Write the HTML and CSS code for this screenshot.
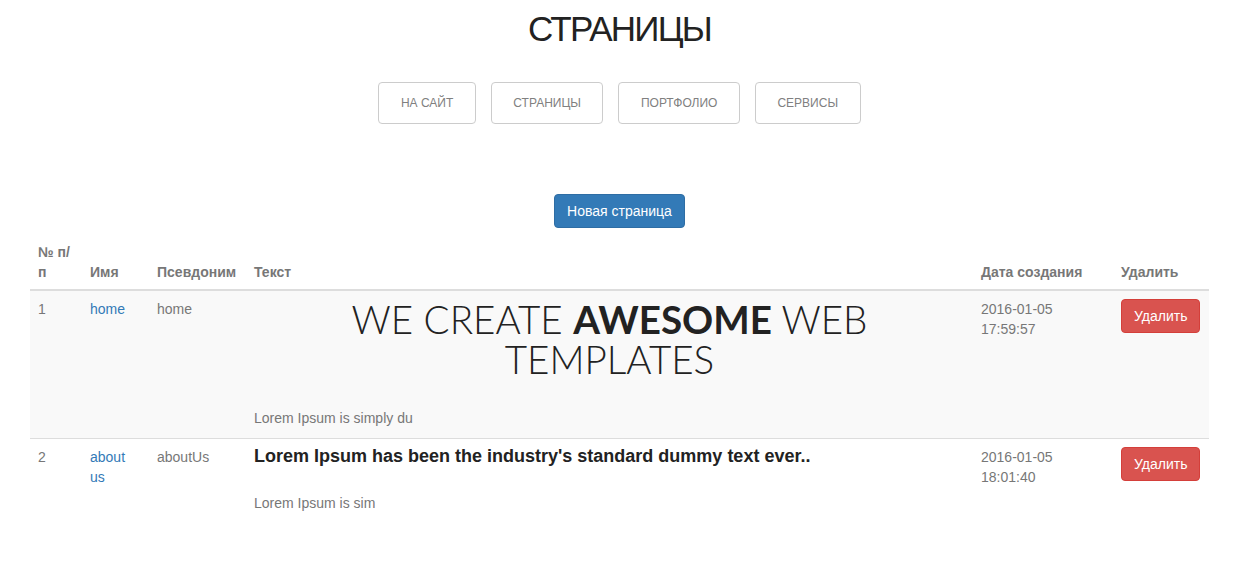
FILE: index.html
```html
<!DOCTYPE html>
<html lang="ru">
<head>
<meta charset="utf-8">
<title>Страницы</title>
<link rel="stylesheet" href="styles.css">
</head>
<body>
<div class="page">
  <h1 class="title">СТРАНИЦЫ</h1>
  <nav class="nav">
    <a class="nav-btn" href="#">На сайт</a>
    <a class="nav-btn" href="#">Страницы</a>
    <a class="nav-btn" href="#">Портфолио</a>
    <a class="nav-btn" href="#">Сервисы</a>
  </nav>
  <div class="actions">
    <a class="btn btn-primary" href="#">Новая страница</a>
  </div>
  <table class="table">
    <colgroup>
      <col class="c1"><col class="c2"><col class="c3"><col class="c4"><col class="c5"><col class="c6">
    </colgroup>
    <thead>
      <tr>
        <th>№ п/п</th>
        <th>Имя</th>
        <th>Псевдоним</th>
        <th>Текст</th>
        <th>Дата создания</th>
        <th>Удалить</th>
      </tr>
    </thead>
    <tbody>
      <tr class="odd">
        <td>1</td>
        <td><a href="#">home</a></td>
        <td>home</td>
        <td>
          <h2 class="hero">WE CREATE <b>AWESOME</b> WEB TEMPLATES</h2>
          <p class="excerpt first">Lorem Ipsum is simply du</p>
        </td>
        <td>2016-01-05 17:59:57</td>
        <td><a class="btn btn-danger" href="#">Удалить</a></td>
      </tr>
      <tr>
        <td>2</td>
        <td><a href="#">about us</a></td>
        <td>aboutUs</td>
        <td>
          <h3 class="lead">Lorem Ipsum has been the industry's standard dummy text ever..</h3>
          <p class="excerpt">Lorem Ipsum is sim</p>
        </td>
        <td>2016-01-05 18:01:40</td>
        <td><a class="btn btn-danger" href="#">Удалить</a></td>
      </tr>
    </tbody>
  </table>
</div>
</body>
</html>
```

FILE: styles.css
```css
* { box-sizing: border-box; }
html, body { margin: 0; background: #fff; }
body {
  font-family: "Liberation Sans", Arial, sans-serif;
  font-size: 14px;
  line-height: 20px;
  color: #777;
}
.page {
  padding: 0 35px 0 30px;
  display: flex;
  flex-direction: column;
  align-items: center;
}
.title {
  margin: 9px 0 0;
  font-size: 35px;
  line-height: 40px;
  font-weight: normal;
  color: #222;
  letter-spacing: -1.75px;
}
.nav {
  display: flex;
  gap: 15px;
  margin-top: 33px;
}
.nav-btn {
  display: block;
  height: 42px;
  line-height: 40px;
  padding: 0 21.5px;
  border: 1px solid #ccc;
  border-radius: 4px;
  font-size: 12px;
  text-transform: uppercase;
  color: #808080;
  text-decoration: none;
}
.actions {
  margin-top: 70px;
  display: flex;
  justify-content: center;
}
.btn {
  display: inline-block;
  padding: 6px 12px;
  line-height: 20px;
  font-size: 14px;
  border: 1px solid transparent;
  border-radius: 4px;
  color: #fff;
  text-decoration: none;
}
.btn-primary { background: #337ab7; border-color: #2e6da4; }
.btn-danger { background: #d9534f; border-color: #d43f3a; }
.table {
  width: 100%;
  border-collapse: collapse;
  table-layout: fixed;
  margin-top: 6px;
}
.c1 { width: 52px; }
.c2 { width: 67px; }
.c3 { width: 97px; }
.c5 { width: 140px; }
.c6 { width: 96px; }
.table th {
  text-align: left;
  vertical-align: bottom;
  padding: 8px 8px 7px;
  font-weight: bold;
  color: #777;
  border-bottom: 2px solid #ddd;
}
.table td {
  vertical-align: top;
  padding: 8px;
  border-top: 1px solid #ddd;
}
.table tbody tr:first-child td { border-top: 0; }
.table tr.odd td { background: #f9f9f9; }
.table a:not(.btn) { color: #337ab7; text-decoration: none; }
.hero {
  margin: 0;
  text-align: center;
  font-family: Lato, "Liberation Sans", sans-serif;
  font-weight: 300;
  font-size: 38.6px;
  line-height: 40px;
  color: #222;
}
.hero b { font-weight: 700; }
.lead {
  margin: 0;
  font-size: 18px;
  line-height: 18px;
  font-weight: bold;
  color: #222;
}
.excerpt { margin: 0; }
.excerpt.first { margin-top: 29px; margin-bottom: 2px; }
.lead + .excerpt { margin-top: 28px; margin-bottom: 10px; }
```
